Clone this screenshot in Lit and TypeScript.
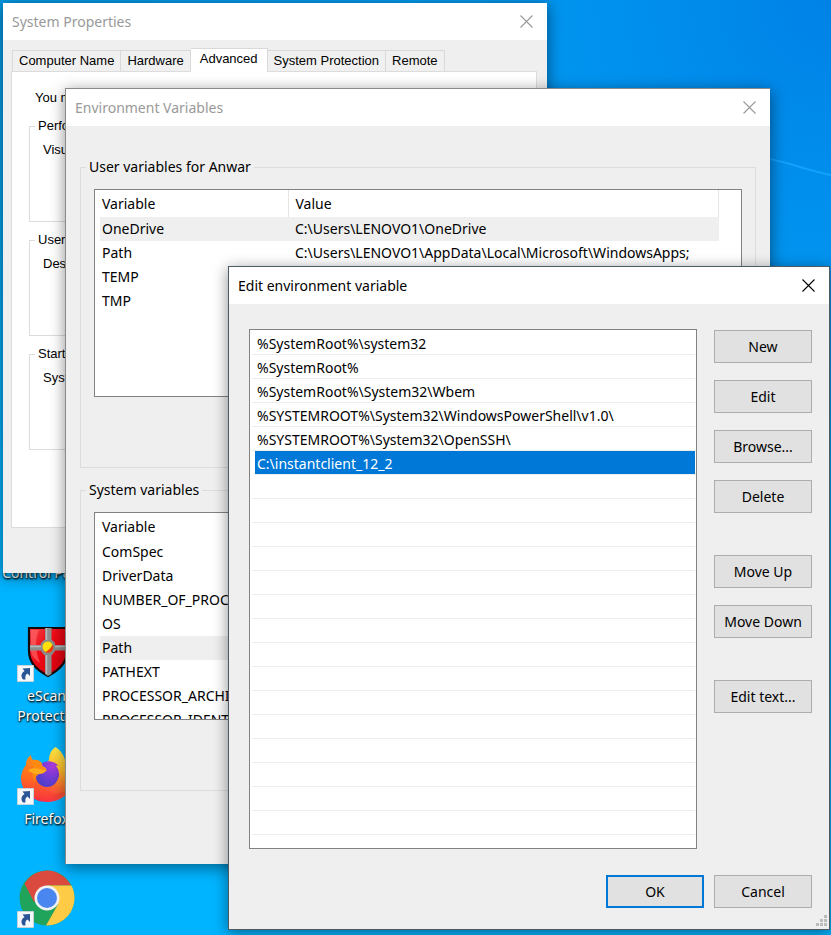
import { LitElement, html, css, svg, nothing } from "lit";
import { customElement, property } from "lit/decorators.js";
import { classMap } from "lit/directives/class-map.js";

const ui = css`
  *,
  *::before,
  *::after {
    box-sizing: border-box;
  }
  button {
    font: inherit;
    color: inherit;
    margin: 0;
  }
`;

/** Window frame with a title bar and a close button. */
@customElement("dialog-window")
class DialogWindow extends LitElement {
  @property() heading = "";
  @property({ type: Boolean, reflect: true }) active = false;

  static styles = [
    ui,
    css`
      :host {
        box-sizing: border-box;
        display: flex;
        flex-direction: column;
        background: #efefef;
        border: 1px solid transparent;
        background-clip: padding-box;
        box-shadow: 0 3px 14px rgba(0, 0, 0, 0.45);
      }
      .bar {
        display: flex;
        align-items: center;
        justify-content: space-between;
        height: 37px;
        padding: 0 11px 0 9px;
        background: #fff;
        color: #999;
        flex: none;
      }
      :host([active]) .bar {
        color: #000;
      }
      .heading {
        margin: 0;
        font-size: 14px;
        font-weight: 400;
        white-space: nowrap;
      }
      .close {
        display: flex;
        padding: 3px;
        border: 0;
        background: none;
      }
      .close svg {
        display: block;
        width: 13px;
        height: 13px;
      }
    `,
  ];

  render() {
    return html`
      <header class="bar">
        <h2 class="heading">${this.heading}</h2>
        <button class="close" aria-label="Close">
          <svg viewBox="0 0 13 13" fill="none" stroke="currentColor" stroke-width="1.1">
            <path d="M.5 .5 12.5 12.5M12.5 .5 .5 12.5" />
          </svg>
        </button>
      </header>
      <slot></slot>
    `;
  }
}

const escanIcon = svg`
  <svg viewBox="0 0 56 56">
    <defs>
      <linearGradient id="es" x1="0" y1="0" x2="1" y2="1">
        <stop offset="0" stop-color="#f4444a"/>
        <stop offset=".4" stop-color="#ee0a16"/>
        <stop offset="1" stop-color="#d4000c"/>
      </linearGradient>
    </defs>
    <path d="M10 4h38v23c0 12-8 19-19 25C18 46 10 39 10 27z" fill="url(#es)" stroke="#120a0c" stroke-width="2.200"/>
    <path d="M12 6h8c-4 9-4 20 1 33-6-4-9-8-9-13z" fill="#ff6a6e" opacity=".6"/>
    <path d="M26 4h6.500v46l-3.500 2-3-2zM11 21h36v5.500H11z" fill="#8e8e8e"/>
    <path d="M27.500 4v46M11 22.500h36" fill="none" stroke="#b9b9b9" stroke-width="1.500"/>
    <path d="M22 19l3-3h8l3 3v8l-3 4h-8l-3-4z" fill="#8a8a8a"/>
    <circle cx="29" cy="23.500" r="5.200" fill="#f43a00"/>
    <path d="M24 25a5.200 5.200 0 0 1 9.500-4.500c-1 3-4 6-7 7.500a5 5 0 0 1-2.500-3z" fill="#ffe00a"/>
  </svg>`;

const firefoxIcon = svg`
  <svg viewBox="0 0 56 56">
    <defs>
      <linearGradient id="fx" x1=".8" y1="0" x2=".35" y2="1">
        <stop offset="0" stop-color="#fff04a"/>
        <stop offset=".35" stop-color="#ffc02a"/>
        <stop offset=".65" stop-color="#ff6a2c"/>
        <stop offset="1" stop-color="#f5205e"/>
      </linearGradient>
      <linearGradient id="fl" x1=".5" y1="0" x2=".4" y2="1">
        <stop offset="0" stop-color="#ff8f16"/>
        <stop offset=".5" stop-color="#ff6c20"/>
        <stop offset="1" stop-color="#f8333f"/>
      </linearGradient>
      <radialGradient id="fp" cx=".75" cy=".15" r=".9">
        <stop offset="0" stop-color="#b03bdc"/>
        <stop offset=".5" stop-color="#7a3bd8"/>
        <stop offset="1" stop-color="#4b3fc8"/>
      </radialGradient>
    </defs>
    <path d="M36.500 0C32 3 30 8 30 13l-9 10-19 7c0 14 11 25 26 25s26-10 26-25c0-7-3-13-8-17-1-5-5-10-9.500-13z" fill="url(#fx)"/>
    <path d="M12 8c-4 3-5 6-5 10-4 5-5 10-5 14 1 13 12 22 25 22 9 0 16-4 19-9-5 2-12 2-17-1-8-3-13-9-12-17 0-5 2-8 6-11-3-3-6-4-9-3-1-1-2-3-2-5z" fill="url(#fl)"/>
    <path d="M21 18c5-5 13-5 19 1-2-1-3 0-3 0 3 4 4 9 2 13-2 5-6 8-11 8-7 0-12-6-11-13 1-5 3-6 10-5 1-1-4-3-6-4z" fill="url(#fp)"/>
    <path d="M13 14c4-2 8-1 10 3 0 2 2 4 5 6-2 3-5 3-8 4-3 2-5 5-4 9-3-6-3-10-1-14z" fill="#ff8a12"/>
    <path d="M9 23c4-2 8-2 11-1 3 1 5 1 7 1-1 3-4 4-8 4-3 0-7-1-10-4z" fill="#ffac1c"/>
  </svg>`;

const chromeIcon = svg`
  <svg viewBox="0 0 56 56">
    <circle cx="28" cy="28" r="27.500" fill="#20a35b"/>
    <path d="M28 .5A27.500 27.500 0 0 1 52 15.500H28L15 32 5.500 13.500A27.500 27.500 0 0 1 28 .5z" fill="#db4a3e"/>
    <path d="M28 15.500h24.500A27.500 27.500 0 0 1 27 55.500l12-21z" fill="#fdcb45"/>
    <circle cx="28" cy="28" r="12.500" fill="#f2f2f2"/>
    <circle cx="28" cy="28" r="10" fill="#4a86f0"/>
  </svg>`;

const shortcut = svg`
  <svg class="shortcut" viewBox="0 0 17 17">
    <path d="M.5 .5h16v16H.5z" fill="#f5f8fb" stroke="#c5d3de"/>
    <path d="M5.500 3.500 13 3v8l-2.500-2.500C8.500 9.500 8 11.500 8.500 14.500H6C4 12 3.500 8.500 7.500 6z" fill="#2a5596"/>
  </svg>`;

interface Shortcut {
  slot: number;
  lines: string[];
  icon: unknown;
}

const shortcuts: Shortcut[] = [
  { slot: 5, lines: ["Control Panel"], icon: nothing },
  { slot: 6, lines: ["eScan", "Protect..."], icon: escanIcon },
  { slot: 7, lines: ["Firefox"], icon: firefoxIcon },
  { slot: 8, lines: [], icon: chromeIcon },
];

/** Column of shortcuts down the left edge of the desktop. */
@customElement("desktop-icons")
class DesktopIcons extends LitElement {
  static styles = [
    ui,
    css`
      :host {
        display: grid;
        width: 93px;
        padding-top: 9px;
        grid-auto-rows: 123px;
      }
      .item {
        display: flex;
        flex-direction: column;
        align-items: center;
        gap: 6px;
        color: #fff;
        font-size: 14px;
        line-height: 20px;
        text-align: center;
        text-decoration: none;
        white-space: nowrap;
        text-shadow: 1px 1px 2px #000, 0 1px 2px rgba(0, 0, 0, 0.8);
      }
      .art {
        position: relative;
        width: 56px;
        height: 56px;
      }
      .art svg {
        display: block;
      }
      .art .shortcut {
        position: absolute;
        left: -2px;
        bottom: -2px;
        width: 17px;
      }
      .line {
        display: block;
      }
    `,
  ];

  render() {
    return shortcuts.map(
      (s) => html`
        <a
          class="item"
          href="#"
          style="grid-row: ${s.slot}"
          aria-label=${s.lines.join(" ") || "Browser"}
        >
          <span class="art">${s.icon}${s.icon === nothing ? nothing : shortcut}</span>
          <span>${s.lines.map((l) => html`<span class="line">${l}</span>`)}</span>
        </a>
      `
    );
  }
}

/** Advanced page of the system settings. */
@customElement("system-properties")
class SystemProperties extends LitElement {
  static styles = [
    ui,
    css`
      :host {
        display: block;
        padding: 8px 10px 45px 8px;
        font: 13px/16px "Liberation Sans", Arial, sans-serif;
        color: #000;
      }
      .tabs {
        display: flex;
        align-items: flex-end;
        padding-left: 1px;
      }
      .tab {
        height: 21px;
        padding: 0 6px;
        border: 1px solid #d9d9d9;
        border-width: 1px 1px 0 0;
        background: #f0f0f0;
        white-space: nowrap;
      }
      .tab:first-child {
        border-left-width: 1px;
      }
      .tab.on {
        height: 24px;
        margin-bottom: -1px;
        padding: 0 9px 3px;
        background: #fff;
        z-index: 1;
      }
      .page {
        height: 457px;
        padding: 18px 17px;
        border: 1px solid #dcdcdc;
        background: #fff;
        overflow: hidden;
        white-space: nowrap;
      }
      .note {
        margin: 0 0 12px 6px;
      }
      .group {
        height: 104px;
        margin: 0 0 10px;
        padding: 8px 13px;
        border: 1px solid #dcdcdc;
        min-width: 0;
      }
      .group legend {
        margin-left: -8px;
        padding: 0 3px;
      }
      .group p {
        margin: 0;
      }
    `,
  ];

  private tabs = ["Computer Name", "Hardware", "Advanced", "System Protection", "Remote"];
  private groups = [
    ["Performance", "Visual effects"],
    ["User Profiles", "Desktop settings"],
    ["Startup and Recovery", "System startup"],
  ];

  render() {
    return html`
      <div class="tabs" role="tablist">
        ${this.tabs.map((t) => {
          const on = t === "Advanced";
          return html`<button
            role="tab"
            aria-selected=${String(on)}
            class=${classMap({ tab: true, on })}
          >
            ${t}
          </button>`;
        })}
      </div>
      <div class="page" role="tabpanel">
        <p class="note">You must be logged on</p>
        ${this.groups.map(
          ([name, text]) => html`
            <fieldset class="group">
              <legend>${name}</legend>
              <p>${text}</p>
            </fieldset>
          `
        )}
      </div>
    `;
  }
}

interface Variable {
  name: string;
  value?: string;
}

const userVariables: Variable[] = [
  { name: "OneDrive", value: "C:\\Users\\LENOVO1\\OneDrive" },
  { name: "Path", value: "C:\\Users\\LENOVO1\\AppData\\Local\\Microsoft\\WindowsApps;" },
  { name: "TEMP" },
  { name: "TMP" },
];

const systemVariables: Variable[] = [
  "ComSpec",
  "DriverData",
  "NUMBER_OF_PROCESSORS",
  "OS",
  "Path",
  "PATHEXT",
  "PROCESSOR_ARCHITECTURE",
  "PROCESSOR_IDENTIFIER",
].map((name) => ({ name }));

/** User and system variable lists. */
@customElement("environment-variables")
class EnvironmentVariables extends LitElement {
  static styles = [
    ui,
    css`
      :host {
        display: flex;
        flex-direction: column;
        gap: 11px;
        padding: 30px 14px 73px;
        font-size: 14px;
        color: #000;
      }
      .group {
        margin: 0;
        height: 312px;
        padding: 11px 13px 0;
        border: 1px solid #dcdcdc;
        min-width: 0;
      }
      .group legend {
        margin-left: -8px;
        padding: 0 3px;
        line-height: 22px;
      }
      .box {
        height: 208px;
        padding: 0 22px 0 5px;
        border: 1px solid #828282;
        background: #fff;
        overflow: hidden;
      }
      .list {
        width: 100%;
        table-layout: fixed;
        border-collapse: collapse;
        line-height: 20px;
        white-space: nowrap;
      }
      .list th,
      .list td {
        height: 24px;
        padding: 0 0 0 2px;
        font-weight: 400;
        text-align: left;
      }
      .list th {
        height: 27px;
        border-right: 1px solid #e5e5e5;
      }
      .list th:first-child {
        width: 188px;
      }
      .list th + th,
      .list td + td {
        padding-left: 7px;
      }
      .chosen {
        background: #efefef;
      }
    `,
  ];

  private group(title: string, rows: Variable[], chosen: string) {
    return html`
      <fieldset class="group">
        <legend>${title}</legend>
        <div class="box">
          <table class="list">
            <thead>
              <tr>
                <th>Variable</th>
                <th>Value</th>
              </tr>
            </thead>
            <tbody>
              ${rows.map(
                (r) => html`<tr class=${classMap({ chosen: r.name === chosen })}>
                  <td>${r.name}</td>
                  <td>${r.value ?? nothing}</td>
                </tr>`
              )}
            </tbody>
          </table>
        </div>
      </fieldset>
    `;
  }

  render() {
    return html`
      ${this.group("User variables for Anwar", userVariables, "OneDrive")}
      ${this.group("System variables", systemVariables, "Path")}
    `;
  }
}

const paths = [
  "%SystemRoot%\\system32",
  "%SystemRoot%",
  "%SystemRoot%\\System32\\Wbem",
  "%SYSTEMROOT%\\System32\\WindowsPowerShell\\v1.0\\",
  "%SYSTEMROOT%\\System32\\OpenSSH\\",
  "C:\\instantclient_12_2",
];
const rowCount = 21;

/** Editor for the entries of one path variable. */
@customElement("path-editor")
class PathEditor extends LitElement {
  static styles = [
    ui,
    css`
      :host {
        display: block;
        padding: 25px 17px 3px 20px;
        font-size: 14px;
        color: #000;
      }
      .main {
        display: grid;
        grid-template-columns: minmax(0, 1fr) 98px;
        gap: 17px;
      }
      .entries {
        margin: 0;
        padding: 1px 1px 13px 2px;
        list-style: none;
        background: #fff;
        border: 1px solid #828282;
      }
      .entry {
        height: 24px;
        padding: 1px 0 0 5px;
        border-bottom: 1px solid #ececec;
        line-height: 24px;
        white-space: nowrap;
      }
      .entry.chosen {
        margin-left: 3px;
        padding-left: 2px;
        background: #0078d7;
        color: #fff;
      }
      .actions {
        display: flex;
        flex-direction: column;
        gap: 17px;
        padding-top: 1px;
      }
      .gap {
        margin-top: 25px;
      }
      .push {
        width: 98px;
        height: 33px;
        padding: 0;
        border: 1px solid #adadad;
        background: #e1e1e1;
        white-space: nowrap;
      }
      .push.default {
        border: 2px solid #0078d7;
      }
      .footer {
        display: flex;
        justify-content: flex-end;
        gap: 10px;
        padding-top: 26px;
      }
      .grip {
        display: block;
        width: 12px;
        height: 12px;
        margin: 7px -16px -1px auto;
      }
    `,
  ];

  private actions = ["New", "Edit", "Browse...", "Delete", "Move Up", "Move Down", "Edit text..."];

  render() {
    return html`
      <div class="main">
        <ul class="entries" role="listbox" aria-label="Path entries">
          ${Array.from({ length: rowCount }, (_, i) => {
            const chosen = i === 5;
            return html`<li
              role="option"
              aria-selected=${String(chosen)}
              class=${classMap({ entry: true, chosen })}
            >${paths[i] ?? nothing}</li>`;
          })}
        </ul>
        <div class="actions">
          ${this.actions.map(
            (a) => html`<button
              class=${classMap({ push: true, gap: a === "Move Up" || a === "Edit text..." })}
            >
              ${a}
            </button>`
          )}
        </div>
      </div>
      <div class="footer">
        <button class="push default">OK</button>
        <button class="push">Cancel</button>
      </div>
      <svg class="grip" viewBox="0 0 12 12" fill="#bcbcbc">
        <path d="M8 0h3v3H8zM4 4h3v3H4zM8 4h3v3H8zM0 8h3v3H0zM4 8h3v3H4zM8 8h3v3H8z" />
      </svg>
    `;
  }
}

@customElement("app-root")
class AppRoot extends LitElement {
  static styles = [
    ui,
    css`
      :host {
        display: block;
        position: relative;
        height: 100vh;
        overflow: hidden;
        font-family: "Noto Sans", "Open Sans", sans-serif;
        background: radial-gradient(circle at 100% 0, #0082e6 0, #0092ee 240px, #009cf2 420px, transparent 900px),
          linear-gradient(#0098e0, #00b4ff 60%);
      }
      .ray {
        position: absolute;
        top: 150px;
        right: 0;
        width: 61px;
        height: 30px;
      }
      .system,
      .environment,
      .editor {
        position: absolute;
      }
      .system {
        top: 2px;
        left: 2px;
        right: 283px;
      }
      .environment {
        top: 88px;
        left: 65px;
        right: 60px;
        border-color: #8a8a8a transparent transparent #8a8a8a;
      }
      .editor {
        top: 266px;
        left: 228px;
        right: 1px;
        border-color: #4c5a64;
      }
    `,
  ];

  render() {
    return html`
      <svg class="ray" viewBox="0 0 61 30" fill="none" stroke="#12a2fb" stroke-width="2">
        <path d="M0 9C20 13 40 21 61 25" />
      </svg>
      <desktop-icons></desktop-icons>
      <dialog-window class="system" heading="System Properties">
        <system-properties></system-properties>
      </dialog-window>
      <dialog-window class="environment" heading="Environment Variables">
        <environment-variables></environment-variables>
      </dialog-window>
      <dialog-window class="editor" heading="Edit environment variable" active>
        <path-editor></path-editor>
      </dialog-window>
    `;
  }
}
